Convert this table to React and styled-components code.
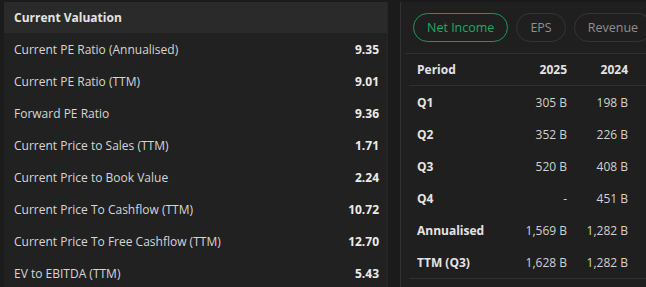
import React, { useState } from "react";
import styled, { createGlobalStyle } from "styled-components";

const valuation = [
  ["Current PE Ratio (Annualised)", "9.35"],
  ["Current PE Ratio (TTM)", "9.01"],
  ["Forward PE Ratio", "9.36"],
  ["Current Price to Sales (TTM)", "1.71"],
  ["Current Price to Book Value", "2.24"],
  ["Current Price To Cashflow (TTM)", "10.72"],
  ["Current Price To Free Cashflow (TTM)", "12.70"],
  ["EV to EBITDA (TTM)", "5.43"],
];

const earnings = [
  ["Q1", "305 B", "198 B"],
  ["Q2", "352 B", "226 B"],
  ["Q3", "520 B", "408 B"],
  ["Q4", "-", "451 B"],
  ["Annualised", "1,569 B", "1,282 B"],
  ["TTM (Q3)", "1,628 B", "1,282 B"],
];

const tabs = ["Net Income", "EPS", "Revenue"];

const GlobalStyle = createGlobalStyle`
  html, body {
    margin: 0;
    background: #1b1b1b;
    font-family: "Open Sans", "Noto Sans", sans-serif;
    font-size: 12px;
    color: #d6d6d6;
  }
`;

const Page = styled.div`
  display: flex;
  width: 646px;
  height: 287px;
  padding: 2px 0 0 4px;
  box-sizing: border-box;
  overflow: hidden;
`;

const ValuationPanel = styled.section`
  width: 383px;
  flex-shrink: 0;
  background: #212121;
  border-right: 1px solid #262626;
`;

const PanelHeader = styled.div`
  height: 31px;
  display: flex;
  align-items: center;
  padding: 0 10px;
  background: #2a2a2a;
  font-weight: 700;
  color: #e4e4e4;
`;

const ValuationRow = styled.div`
  height: 32.1px;
  display: flex;
  align-items: center;
  justify-content: space-between;
  padding: 0 8px 0 10px;
`;

const Value = styled.span`
  font-weight: 700;
  color: #ececec;
`;

const Gutter = styled.div`
  width: 12px;
  flex-shrink: 0;
  border-right: 1px solid #323232;
`;

const EarningsPanel = styled.section`
  flex: 1;
  min-width: 0;
  overflow: hidden;
  background: #1f1f1f;
  display: flex;
  flex-direction: column;
`;

const TabBar = styled.div`
  display: flex;
  gap: 8px;
  padding: 11px 0 0 8px;
  height: 52px;
  box-sizing: border-box;
  border-bottom: 1px solid #303030;
  margin-left: 4px;
`;

const Pill = styled.button`
  height: 29px;
  padding: 0 13px;
  border-radius: 15px;
  background: transparent;
  border: 1px solid ${(p) => (p.$active ? "#169a5c" : "#353535")};
  color: ${(p) => (p.$active ? "#1fa866" : "#8f8f8f")};
  font-family: inherit;
  font-size: 12.5px;
  white-space: nowrap;
  flex-shrink: 0;
  cursor: pointer;
`;

const Table = styled.div`
  margin-left: 8px;
  border-bottom: 1px solid #303030;
`;

const TableRow = styled.div`
  display: grid;
  grid-template-columns: 1fr 61px 61px;
  align-items: center;
  height: 32px;
  box-sizing: border-box;
  padding: 0 18px 0 8px;
  border-bottom: ${(p) => (p.$head ? "1px solid #303030" : "none")};
`;

const RowLabel = styled.span`
  font-weight: 700;
  color: #e4e4e4;
`;

const Cell = styled.span`
  text-align: right;
  font-weight: ${(p) => (p.$head ? 700 : 400)};
  color: ${(p) => (p.$head ? "#e4e4e4" : "#d2d2d2")};
`;

export default function App() {
  const [tab, setTab] = useState("Net Income");
  return (
    <>
      <GlobalStyle />
      <Page>
        <ValuationPanel>
          <PanelHeader>Current Valuation</PanelHeader>
          {valuation.map(([label, value]) => (
            <ValuationRow key={label}>
              <span>{label}</span>
              <Value>{value}</Value>
            </ValuationRow>
          ))}
        </ValuationPanel>
        <Gutter />
        <EarningsPanel>
          <TabBar>
            {tabs.map((t) => (
              <Pill key={t} $active={t === tab} onClick={() => setTab(t)}>
                {t}
              </Pill>
            ))}
          </TabBar>
          <Table>
            <TableRow $head>
              <RowLabel>Period</RowLabel>
              <Cell $head>2025</Cell>
              <Cell $head>2024</Cell>
            </TableRow>
            {earnings.map(([period, a, b]) => (
              <TableRow key={period}>
                <RowLabel>{period}</RowLabel>
                <Cell>{a}</Cell>
                <Cell>{b}</Cell>
              </TableRow>
            ))}
          </Table>
        </EarningsPanel>
      </Page>
    </>
  );
}
